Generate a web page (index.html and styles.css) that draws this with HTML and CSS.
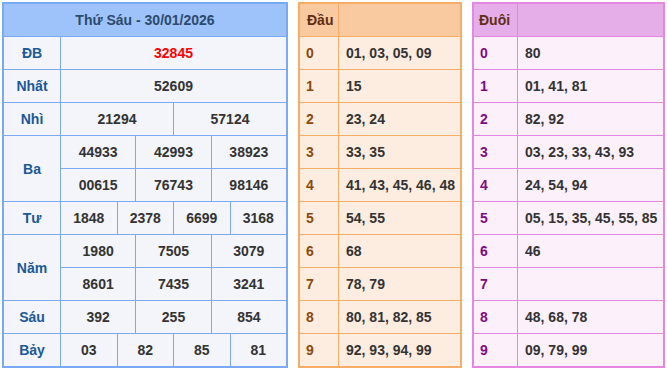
FILE: index.html
```html
<!DOCTYPE html>
<html lang="vi">
<head>
    <meta charset="UTF-8">
    <meta name="viewport" content="width=device-width, initial-scale=1.0">
    <title>Kết quả xổ số</title>

    <link rel="stylesheet" href="styles.css">
</head>
<body>

    <div class="wrap">

        <div class="kq">
            <div class="kq-head">Thứ Sáu - 30/01/2026</div>

            <div class="lbl">ĐB</div>
            <div class="val s12 red">32845</div>

            <div class="lbl">Nhất</div>
            <div class="val s12">52609</div>

            <div class="lbl">Nhì</div>
            <div class="val s6">21294</div>
            <div class="val s6">57124</div>

            <div class="lbl r2">Ba</div>
            <div class="val s4">44933</div>
            <div class="val s4">42993</div>
            <div class="val s4">38923</div>
            <div class="val s4">00615</div>
            <div class="val s4">76743</div>
            <div class="val s4">98146</div>

            <div class="lbl">Tư</div>
            <div class="val s3">1848</div>
            <div class="val s3">2378</div>
            <div class="val s3">6699</div>
            <div class="val s3">3168</div>

            <div class="lbl r2">Năm</div>
            <div class="val s4">1980</div>
            <div class="val s4">7505</div>
            <div class="val s4">3079</div>
            <div class="val s4">8601</div>
            <div class="val s4">7435</div>
            <div class="val s4">3241</div>

            <div class="lbl">Sáu</div>
            <div class="val s4">392</div>
            <div class="val s4">255</div>
            <div class="val s4">854</div>

            <div class="lbl">Bảy</div>
            <div class="val s3">03</div>
            <div class="val s3">82</div>
            <div class="val s3">85</div>
            <div class="val s3">81</div>
        </div>

        <div class="lt dau">
            <div class="th">Đầu</div><div class="th"></div>
            <div class="k">0</div><div class="v">01, 03, 05, 09</div>
            <div class="k">1</div><div class="v">15</div>
            <div class="k">2</div><div class="v">23, 24</div>
            <div class="k">3</div><div class="v">33, 35</div>
            <div class="k">4</div><div class="v">41, 43, 45, 46, 48</div>
            <div class="k">5</div><div class="v">54, 55</div>
            <div class="k">6</div><div class="v">68</div>
            <div class="k">7</div><div class="v">78, 79</div>
            <div class="k">8</div><div class="v">80, 81, 82, 85</div>
            <div class="k">9</div><div class="v">92, 93, 94, 99</div>
        </div>

        <div class="lt duoi">
            <div class="th">Đuôi</div><div class="th"></div>
            <div class="k">0</div><div class="v">80</div>
            <div class="k">1</div><div class="v">01, 41, 81</div>
            <div class="k">2</div><div class="v">82, 92</div>
            <div class="k">3</div><div class="v">03, 23, 33, 43, 93</div>
            <div class="k">4</div><div class="v">24, 54, 94</div>
            <div class="k">5</div><div class="v">05, 15, 35, 45, 55, 85</div>
            <div class="k">6</div><div class="v">46</div>
            <div class="k">7</div><div class="v"></div>
            <div class="k">8</div><div class="v">48, 68, 78</div>
            <div class="k">9</div><div class="v">09, 79, 99</div>
        </div>

    </div>

</body>
</html>
```

FILE: styles.css
```css
body {
    margin: 0;
    background-color: #ffffff;
    font-family: "Liberation Sans", Arial, sans-serif;
    font-size: 14px;
    font-weight: bold;
    color: #333333;
}

.wrap {
    display: flex;
    align-items: flex-start;
    gap: 10px;
    padding: 2px;
}

/* bang ket qua */

.kq {
    width: 282px;
    display: grid;
    grid-template-columns: 56px repeat(12, 1fr);
    grid-template-rows: 32px repeat(10, 32px);
    gap: 1px;
    background-color: #7aaaf6;
    border: 2px solid #7aaaf6;
}

.kq > div {
    display: flex;
    align-items: center;
    justify-content: center;
    background-color: #f3f5fa;
}

.kq .kq-head {
    grid-column: 1 / -1;
    background-color: #9ec3fa;
    color: #2c4a6e;
}

.kq .lbl {
    grid-column: 1;
    color: #1b5898;
}

.kq .r2 { grid-row: span 2; }
.kq .s12 { grid-column: span 12; }
.kq .s6 { grid-column: span 6; }
.kq .s4 { grid-column: span 4; }
.kq .s3 { grid-column: span 3; }
.kq .red { color: #ff0000; }

/* loto dau / duoi */

.lt {
    display: grid;
    grid-template-rows: 32px repeat(10, 32px);
    gap: 1px;
}

.lt > div {
    display: flex;
    align-items: center;
    padding-left: 7px;
    white-space: nowrap;
    overflow: hidden;
}

.lt .th { color: #5f2e12; }

.dau {
    width: 160px;
    grid-template-columns: 38px 1fr;
    background-color: #f6ad68;
    border: 2px solid #f6ad68;
}

.dau > div { background-color: #fdede0; }
.dau .th { background-color: #f9c9a0; }
.dau .k { color: #8b4a0a; padding-left: 6px; }

.duoi {
    width: 189px;
    grid-template-columns: 43px 1fr;
    background-color: #e486e2;
    border: 2px solid #e486e2;
}

.duoi > div { background-color: #fcf0fb; }
.duoi .th { background-color: #e5aee9; padding-left: 5px; }
.duoi .k { color: #7d0a86; padding-left: 6px; }
```
